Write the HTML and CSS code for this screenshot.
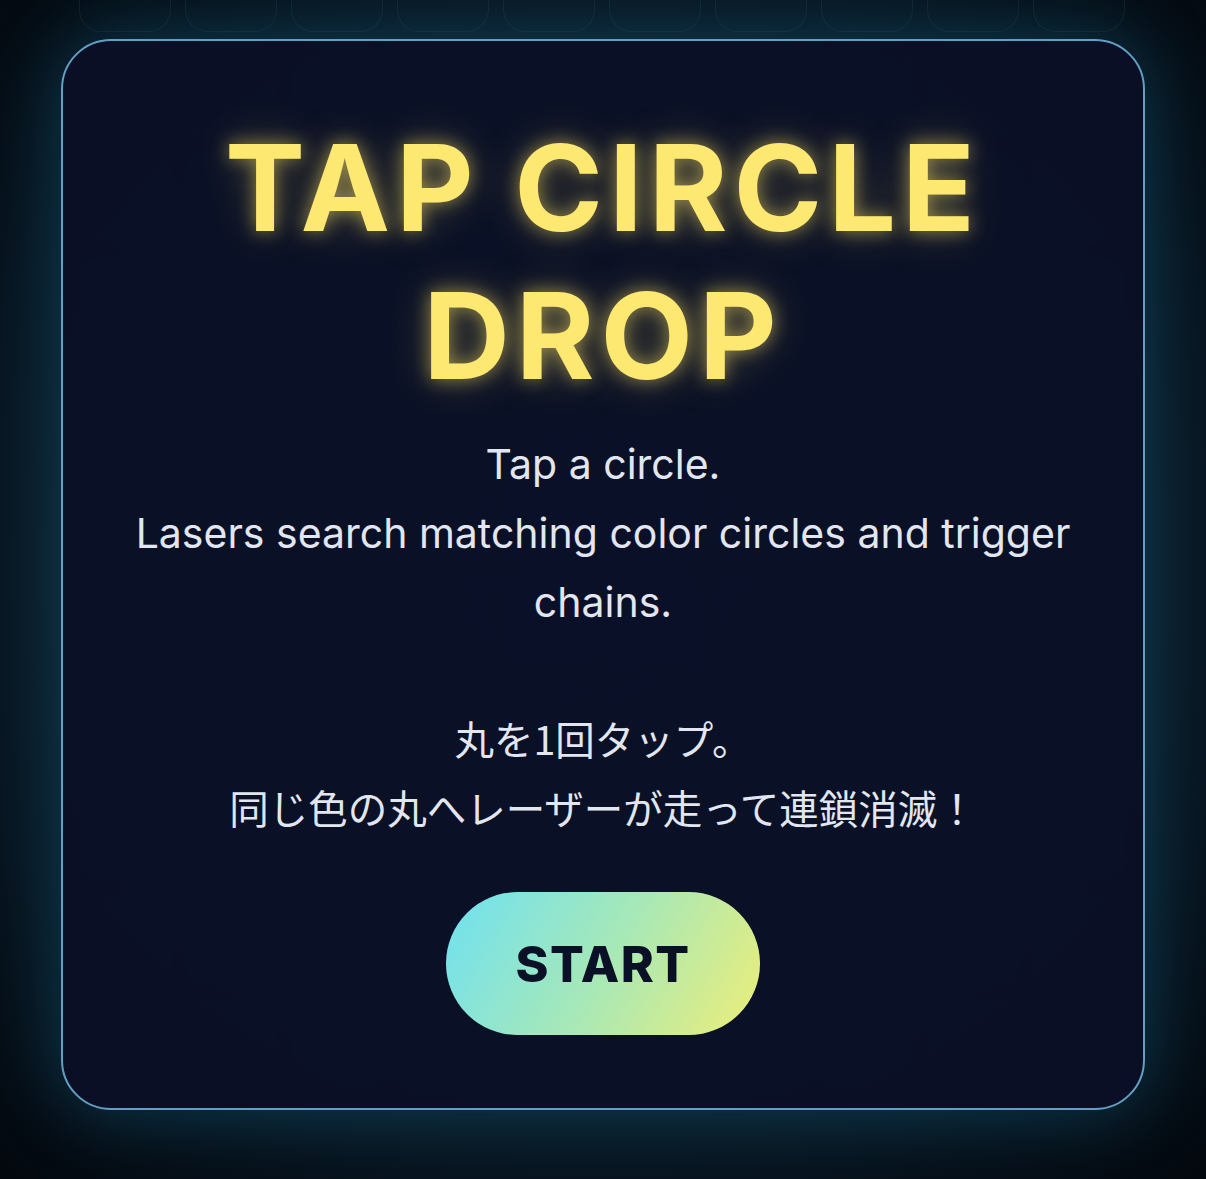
FILE: index.html
```html
<!DOCTYPE html>
<html lang="en">
<head>
<meta charset="utf-8">
<title>Tap Circle Drop</title>
<link rel="stylesheet" href="styles.css">
</head>
<body>
<div class="stage">
  <div class="board" id="board">
    <div class="cell"></div><div class="cell"></div><div class="cell"></div><div class="cell"></div><div class="cell"></div><div class="cell"></div><div class="cell"></div><div class="cell"></div><div class="cell"></div><div class="cell"></div>
    <div class="cell"></div><div class="cell"></div><div class="cell"></div><div class="cell"></div><div class="cell"></div><div class="cell"></div><div class="cell"></div><div class="cell"></div><div class="cell"></div><div class="cell"></div>
    <div class="cell"></div><div class="cell"></div><div class="cell"></div><div class="cell"></div><div class="cell"></div><div class="cell"></div><div class="cell"></div><div class="cell"></div><div class="cell"></div><div class="cell"></div>
    <div class="cell"></div><div class="cell"></div><div class="cell"></div><div class="cell"></div><div class="cell"></div><div class="cell"></div><div class="cell"></div><div class="cell"></div><div class="cell"></div><div class="cell"></div>
    <div class="cell"></div><div class="cell"></div><div class="cell"></div><div class="cell"></div><div class="cell"></div><div class="cell"></div><div class="cell"></div><div class="cell"></div><div class="cell"></div><div class="cell"></div>
    <div class="cell"></div><div class="cell"></div><div class="cell"></div><div class="cell"></div><div class="cell"></div><div class="cell"></div><div class="cell"></div><div class="cell"></div><div class="cell"></div><div class="cell"></div>
    <div class="cell"></div><div class="cell"></div><div class="cell"></div><div class="cell"></div><div class="cell"></div><div class="cell"></div><div class="cell"></div><div class="cell"></div><div class="cell"></div><div class="cell"></div>
    <div class="cell"></div><div class="cell"></div><div class="cell"></div><div class="cell"></div><div class="cell"></div><div class="cell"></div><div class="cell"></div><div class="cell"></div><div class="cell"></div><div class="cell"></div>
    <div class="cell"></div><div class="cell"></div><div class="cell"></div><div class="cell"></div><div class="cell"></div><div class="cell"></div><div class="cell"></div><div class="cell"></div><div class="cell"></div><div class="cell"></div>
    <div class="cell"></div><div class="cell"></div><div class="cell"></div><div class="cell"></div><div class="cell"></div><div class="cell"></div><div class="cell"></div><div class="cell"></div><div class="cell"></div><div class="cell"></div>
    <div class="cell"></div><div class="cell"></div><div class="cell"></div><div class="cell"></div><div class="cell"></div><div class="cell"></div><div class="cell"></div><div class="cell"></div><div class="cell"></div><div class="cell"></div>
  </div>

  <div class="overlay">
    <div class="card">
      <h1 class="title">TAP CIRCLE<br>DROP</h1>
      <p class="desc">Tap a circle.<br>Lasers search matching color circles and trigger chains.<br><br><span class="ja">丸を1回タップ。<br>同じ色の丸へレーザーが走って連鎖消滅！</span></p>
      <button class="start" type="button">START</button>
    </div>
  </div>
</div>
</body>
</html>
```

FILE: styles.css
```css
html, body {
  margin: 0;
  padding: 0;
  height: 100%;
}

body {
  overflow: hidden;
  background: #050a12;
  font-family: "Inter", "Noto Sans CJK JP", sans-serif;
}

.stage {
  position: relative;
  width: 1206px;
  height: 1179px;
  overflow: hidden;
  background:
    radial-gradient(ellipse 75% 72% at 50% 48%, #0d2230 0%, #0b1b27 55%, #081520 72%, #03070d 100%);
}

.board {
  display: grid;
  grid-template-columns: repeat(10, 92px);
  grid-auto-rows: 92px;
  gap: 14px;
  padding-left: 79px;
  margin-top: -60px;
}

.cell {
  border-radius: 22px;
  border: 1px solid rgba(70, 120, 140, 0.14);
  background: rgba(120, 180, 210, 0.012);
}

.overlay {
  position: absolute;
  inset: 0;
  display: flex;
  justify-content: center;
  align-items: flex-start;
  padding-top: 39px;
}

.card {
  box-sizing: border-box;
  width: 1084px;
  height: 1071px;
  border: 2px solid #629fc2;
  border-radius: 50px;
  background: rgba(10, 16, 38, 0.96);
  box-shadow: 0 0 70px rgba(25, 120, 160, 0.42);
  padding: 73px 40px 0;
  display: flex;
  flex-direction: column;
  align-items: center;
  text-align: center;
}

.title {
  margin: 0;
  font-size: 120px;
  line-height: 148px;
  font-weight: 700;
  letter-spacing: 6px;
  color: #fde872;
  text-shadow: 0 0 18px rgba(253, 226, 100, 0.55), 0 0 46px rgba(253, 226, 100, 0.3);
}

.desc {
  margin: 20px 0 0;
  font-size: 41px;
  line-height: 69px;
  font-weight: 400;
  color: #e2e6f0;
}

.ja {
  font-family: "Noto Sans CJK JP", sans-serif;
  font-size: 39.5px;
  line-height: 1;
}

.start {
  margin-top: 48px;
  width: 314px;
  height: 143px;
  border: none;
  border-radius: 72px;
  background: linear-gradient(120deg, #6fe1f2 0%, #a6e8b8 50%, #eeee78 100%);
  color: #0a1126;
  font-family: "Inter", sans-serif;
  font-size: 50px;
  font-weight: 800;
  letter-spacing: 1.5px;
  padding: 0;
}
```
